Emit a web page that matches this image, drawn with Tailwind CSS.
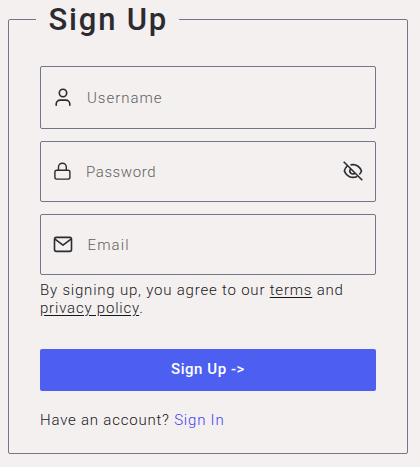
<!DOCTYPE html>
<html lang="en">
<head>
<meta charset="utf-8">
<title>Sign Up</title>
<script src="https://cdn.jsdelivr.net/npm/@tailwindcss/browser@4"></script>
</head>
<body class="h-[467px] overflow-hidden bg-[#f4f0ef] px-2 font-[Roboto,'Liberation_Sans',sans-serif] text-[15px] text-[#2b2b30]">
<form>
<fieldset class="h-[454px] w-[400px] rounded-[2px] border border-[#747688] px-[31px]">
  <legend class="-ml-[4px] h-[39px] w-[143px] whitespace-nowrap pl-[12.5px] text-[31px] leading-[40px] font-[550] tracking-[1.8px]">Sign Up</legend>
  <div class="mt-[27px] flex flex-col gap-3">
    <label class="flex h-[63px] items-center rounded-[2px] border border-[#747688] pl-3">
      <svg class="size-5 shrink-0" viewBox="0 0 20 20" fill="none" stroke="currentColor" stroke-width="1.6" stroke-linecap="round"><circle cx="10" cy="5" r="3.7"/><path d="M3.2 17.3v-1.2a4 4 0 0 1 4-4h5.6a4 4 0 0 1 4 4v1.2"/></svg>
      <input class="mt-[2px] ml-[14px] w-48 bg-transparent font-[350] tracking-[0.98px] outline-none placeholder:text-[#606060]" placeholder="Username">
    </label>
    <label class="flex h-[61px] items-center rounded-[2px] border border-[#747688] pr-[12px] pl-3">
      <svg class="size-5 shrink-0" viewBox="0 0 20 20" fill="none" stroke="currentColor" stroke-width="1.4"><rect x="1.9" y="8.2" width="15" height="8.9" rx="1.8"/><path d="M5.5 8.2V5.1a3.9 3.9 0 0 1 7.8 0v3.1"/></svg>
      <input type="text" class="mt-[2px] ml-[13px] w-48 bg-transparent font-[350] tracking-[0.6px] outline-none placeholder:text-[#606060]" placeholder="Password">
      <svg class="ml-auto size-5 shrink-0 -translate-y-px" viewBox="0 0 20 20" fill="none" stroke="currentColor" stroke-width="1.6"><path d="M.7 .8 19.3 19.2M7.5 3.9c5-.9 9 1.3 11 6.1-.5 1.4-1.2 2.5-2.2 3.5M4.1 5C2.8 6.3 1.9 8 1.4 10c2 5.5 7.5 7.8 12.8 5.4M7.3 8.3c-1.7 3 1.5 5.8 4.3 4.2"/></svg>
    </label>
    <label class="flex h-[61px] items-center rounded-[2px] border border-[#747688] pl-3">
      <svg class="size-5 shrink-0" viewBox="0 0 20 20" fill="none" stroke="currentColor" stroke-width="1.6" stroke-linejoin="round"><rect x="1.5" y="2.4" width="17" height="14" rx="1.8"/><path d="m2 4.1 8 6 8-6"/></svg>
      <input class="mt-[2px] ml-[14.5px] w-48 bg-transparent font-[350] tracking-[1.1px] outline-none placeholder:text-[#606060]" placeholder="Email">
    </label>
  </div>
  <p class="mt-[6px] h-[37px] leading-[18px] font-[350] whitespace-nowrap tracking-[0.8px] text-[#18181c]">By signing up, you agree to our <a class="underline underline-offset-2">terms</a> and<br><a class="underline underline-offset-2">privacy policy</a>.</p>
  <button type="button" class="mt-[31px] block h-[42px] w-full rounded-[2px] bg-[#4c5ff0] pb-[2px] text-[15px] font-medium tracking-[0.55px] text-white">Sign Up -&gt;</button>
  <p class="mt-[19px] leading-5 font-[350] tracking-[0.79px] text-[#18181c]">Have an account? <a class="text-[#3f3fec]">Sign In</a></p>
</fieldset>
</form>
</body>
</html>
